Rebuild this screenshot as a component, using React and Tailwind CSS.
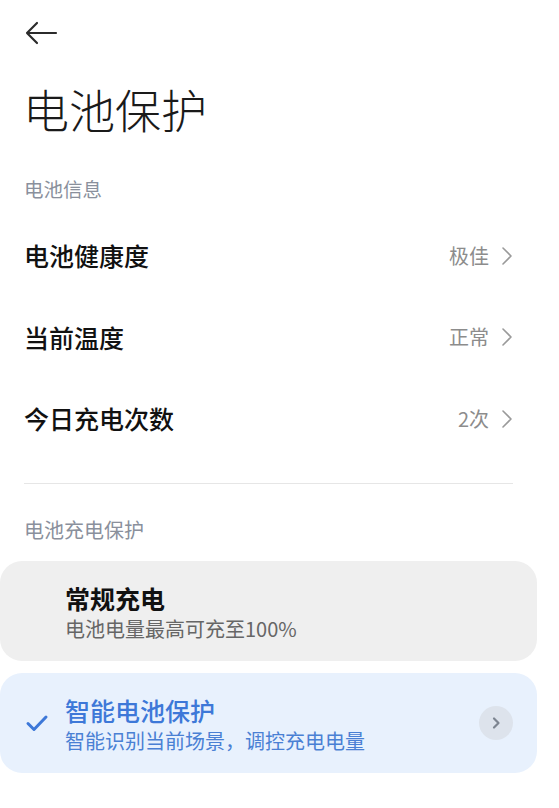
import React from 'react';

const INFO_ROWS = [
  { label: '电池健康度', value: '极佳' },
  { label: '当前温度', value: '正常' },
  { label: '今日充电次数', value: '2次' },
];

function Chevron() {
  return (
    <svg width="12" height="20" viewBox="0 0 12 20" fill="none">
      <path d="M2 2l8 8-8 8" stroke="#9a9a9a" strokeWidth="1.6" strokeLinecap="round" strokeLinejoin="round" />
    </svg>
  );
}

export default function App() {
  return (
    <div
      className="min-h-[808px] bg-white"
      style={{ fontFamily: '"Noto Sans CJK SC", "Noto Sans", sans-serif' }}
    >
      <div className="w-[537px]">
        {/* Back */}
        <div className="h-[66px] px-[24px] flex items-center">
          <svg width="34" height="24" viewBox="0 0 34 24" fill="none">
            <path d="M32 12H3M13 2L3 12l10 10" stroke="#2b2b2b" strokeWidth="2.2" strokeLinecap="round" strokeLinejoin="round" />
          </svg>
        </div>

        {/* Title */}
        <h1 className="px-[23px] h-[84px] flex items-center text-[46px] font-light text-[#1a1a1a] leading-none">
          电池保护
        </h1>

        {/* Section: info */}
        <div className="px-[24px] h-[65px] pb-[12px] flex items-end text-[19.5px] leading-[28px] text-[#8a909c]">电池信息</div>

        <div>
          {INFO_ROWS.map(r => (
            <div key={r.label} className="h-[81.5px] px-[24px] flex items-center justify-between">
              <span className="text-[25px] font-medium text-[#111]">{r.label}</span>
              <span className="flex items-center gap-[12px] text-[20px] text-[#8c8c8c]">
                {r.value}
                <Chevron />
              </span>
            </div>
          ))}
        </div>

        <div className="mx-[24px] mt-[23px] h-px bg-[#e6e6e6]" />

        {/* Section: charging */}
        <div className="px-[24px] h-[77px] pt-[32px] text-[20px] leading-[28px] text-[#8a909c]">电池充电保护</div>

        <div className="flex flex-col gap-[12px]">
          <div className="h-[100px] rounded-[22px] bg-[#efefef] pl-[65px] pt-[4px] flex flex-col justify-center">
            <div className="text-[25px] font-bold text-[#111] leading-[32px]">常规充电</div>
            <div className="text-[20px] text-[#666] leading-[30px]">电池电量最高可充至100%</div>
          </div>

          <div className="h-[100px] rounded-[22px] bg-[#e8f1fd] flex items-center">
            <div className="w-[65px] flex justify-center pl-[8px]">
              <svg width="24" height="20" viewBox="0 0 24 20" fill="none">
                <path d="M3 10.5l6 6L21 4" stroke="#3d78d8" strokeWidth="3" strokeLinecap="round" strokeLinejoin="round" />
              </svg>
            </div>
            <div className="flex-1 flex flex-col justify-center pt-[4px]">
              <div className="text-[25px] font-medium text-[#3d78d8] leading-[32px]">智能电池保护</div>
              <div className="text-[20px] text-[#4a80d4] leading-[30px]">智能识别当前场景，调控充电电量</div>
            </div>
            <div className="mr-[24px] w-[34px] h-[34px] rounded-full bg-[#dde3ec] flex items-center justify-center">
              <svg width="10" height="14" viewBox="0 0 10 14" fill="none">
                <path d="M3 2.5L7.5 7 3 11.5" stroke="#7d8591" strokeWidth="2.2" strokeLinecap="round" strokeLinejoin="round" />
              </svg>
            </div>
          </div>
        </div>
      </div>
    </div>
  );
}
